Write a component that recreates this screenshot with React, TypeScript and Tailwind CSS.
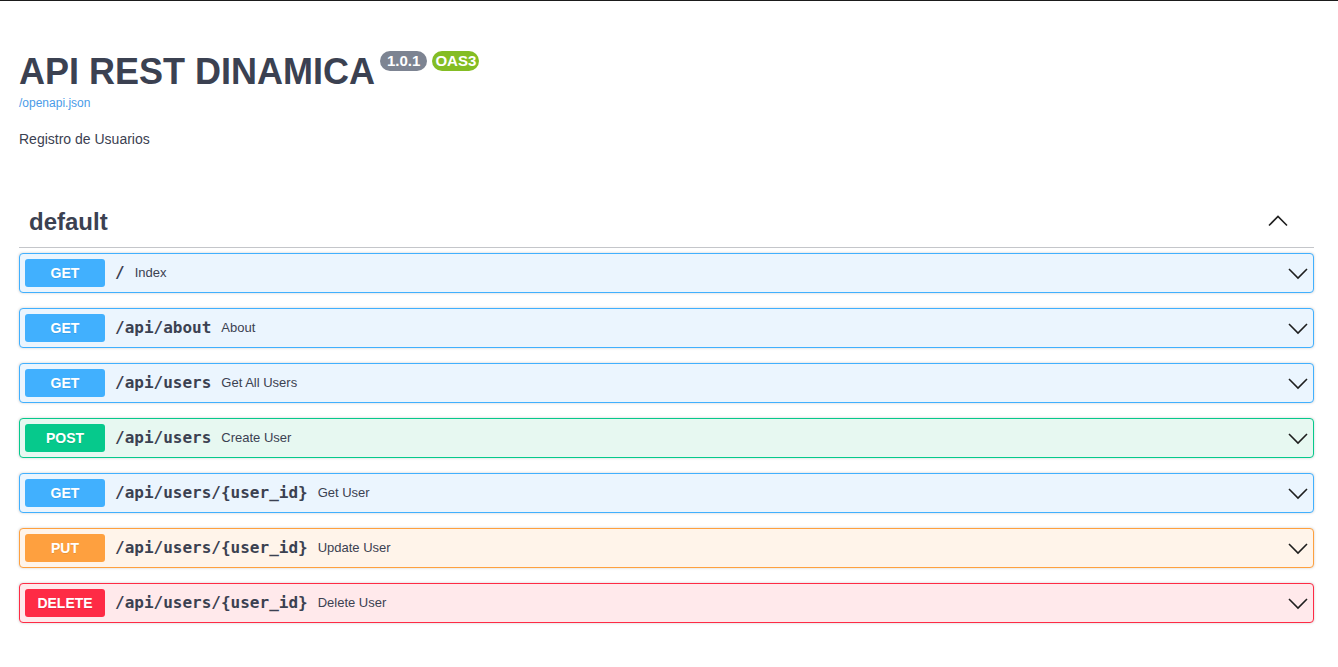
import React from 'react';

type Method = 'GET' | 'POST' | 'PUT' | 'DELETE';

interface Operation {
  method: Method;
  path: string;
  summary: string;
}

const operations: Operation[] = [
  { method: 'GET', path: '/', summary: 'Index' },
  { method: 'GET', path: '/api/about', summary: 'About' },
  { method: 'GET', path: '/api/users', summary: 'Get All Users' },
  { method: 'POST', path: '/api/users', summary: 'Create User' },
  { method: 'GET', path: '/api/users/{user_id}', summary: 'Get User' },
  { method: 'PUT', path: '/api/users/{user_id}', summary: 'Update User' },
  { method: 'DELETE', path: '/api/users/{user_id}', summary: 'Delete User' },
];

// full class names per method so tailwind picks them up
const methodStyles: Record<Method, { block: string; badge: string }> = {
  GET: { block: 'border-[#41b0fe] bg-[#ebf5fe]', badge: 'bg-[#41b0fe]' },
  POST: { block: 'border-[#06c98c] bg-[#e7f8f1]', badge: 'bg-[#06c98c]' },
  PUT: { block: 'border-[#fea03f] bg-[#fff4ea]', badge: 'bg-[#fea03f]' },
  DELETE: { block: 'border-[#fe2b45] bg-[#ffe9eb]', badge: 'bg-[#fe2b45]' },
};

function Chevron({ up = false }: { up?: boolean }) {
  return (
    <svg width="20" height="20" viewBox="0 0 20 20" className="shrink-0" aria-hidden="true">
      <polyline
        points={up ? '1,14.5 10,5.5 19,14.5' : '1,6 10,15 19,6'}
        fill="none"
        stroke="#1f1f1f"
        strokeWidth="1.6"
      />
    </svg>
  );
}

function OpBlock({ op }: { op: Operation }) {
  const s = methodStyles[op.method];
  return (
    <div
      className={`mb-[15px] flex items-center rounded-[4px] border p-[5px] shadow-[0_0_3px_rgba(0,0,0,0.19)] ${s.block}`}
    >
      <span
        className={`w-[80px] rounded-[3px] py-[6px] text-center text-[14px] leading-4 font-bold text-white [text-shadow:0_1px_0_rgba(0,0,0,0.1)] ${s.badge}`}
      >
        {op.method}
      </span>
      <span className="px-[10px] font-['DejaVu_Sans_Mono',monospace] text-[16px] font-bold text-[#3b4151]">
        {op.path}
      </span>
      <span className="flex-1 text-[13px] text-[#3b4151]">{op.summary}</span>
      <Chevron />
    </div>
  );
}

export default function App() {
  return (
    <div className="min-h-screen bg-white font-['Liberation_Sans',Arial,sans-serif] text-[#3b4151]">
      <div className="h-px bg-[#1b1b1b]" />
      <div className="pl-[19px] pr-[24px]">
        {/* Info */}
        <div className="pt-[50px]">
          <div className="flex items-start">
            <h2 className="text-[36px] leading-[41px] font-bold">API REST DINAMICA</h2>
            <span className="mt-[0px] ml-[5px] rounded-full bg-[#7d8492] px-[7px] text-[15px] leading-[20px] font-bold text-white">
              1.0.1
            </span>
            <span className="mt-[0px] ml-[5px] rounded-full bg-[#84bd24] px-[3px] text-[15px] leading-[20px] font-bold text-white">
              OAS3
            </span>
          </div>
          <a className="mt-[4px] block text-[12px] leading-[14px] text-[#4a9be8]">/openapi.json</a>
          <p className="mt-[21px] text-[14px] leading-4">Registro de Usuarios</p>
        </div>

        {/* Tag section */}
        <div className="mt-[50px] flex h-[51px] items-center border-b border-[rgba(59,65,81,0.3)] pl-[10px] pr-[26px]">
          <h3 className="flex-1 text-[24px] leading-7 font-bold">default</h3>
          <div className="-mt-[3px]">
            <Chevron up />
          </div>
        </div>
        <div className="mt-[5px]">
          {operations.map((op, i) => (
            <OpBlock key={i} op={op} />
          ))}
        </div>
      </div>
    </div>
  );
}
